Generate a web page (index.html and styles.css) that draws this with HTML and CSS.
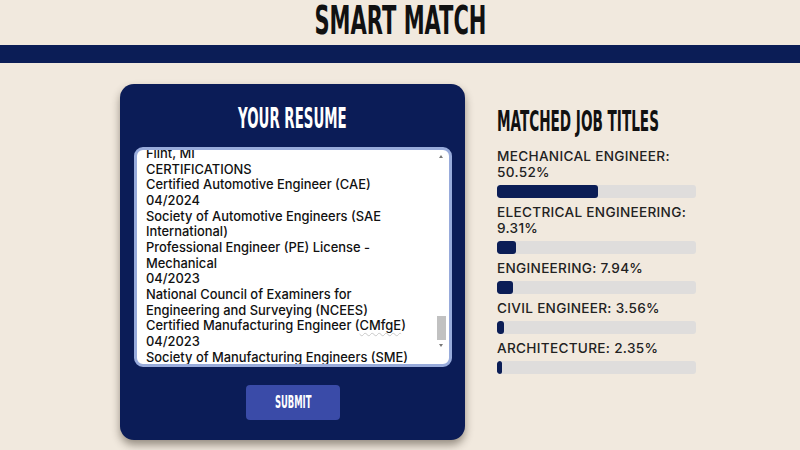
FILE: index.html
```html
<!DOCTYPE html>
<html>
<head>
<meta charset="utf-8">
<link rel="stylesheet" href="styles.css">
</head>
<body>
<header class="top">
  <h1 class="title"><span class="cond">SMART MATCH</span></h1>
</header>
<div class="band"></div>
<main class="main">
  <section class="card">
    <h2 class="card-title"><span class="cond">YOUR RESUME</span></h2>
    <div class="resume-box">
      <div class="resume-text">
        <div class="lines">
          <div>Flint, MI</div>
          <div>CERTIFICATIONS</div>
          <div>Certified Automotive Engineer (CAE)</div>
          <div>04/2024</div>
          <div>Society of Automotive Engineers (SAE</div>
          <div>International)</div>
          <div>Professional Engineer (PE) License -</div>
          <div>Mechanical</div>
          <div>04/2023</div>
          <div>National Council of Examiners for</div>
          <div>Engineering and Surveying (NCEES)</div>
          <div>Certified Manufacturing Engineer (<span class="squiggle">CMfgE</span>)</div>
          <div>04/2023</div>
          <div>Society of Manufacturing Engineers (SME)</div>
        </div>
      </div>
      <div class="scrollbar">
        <span class="arrow up"></span>
        <span class="track"><span class="thumb"></span></span>
        <span class="arrow down"></span>
      </div>
    </div>
    <button class="submit"><span class="cond">SUBMIT</span></button>
  </section>
  <section class="results">
    <h2 class="results-title"><span class="cond">MATCHED JOB TITLES</span></h2>
    <div class="item">
      <div class="label">MECHANICAL ENGINEER:<br>50.52%</div>
      <div class="bar"><div class="fill" style="width:50.52%"></div></div>
    </div>
    <div class="item">
      <div class="label">ELECTRICAL ENGINEERING:<br>9.31%</div>
      <div class="bar"><div class="fill" style="width:9.31%"></div></div>
    </div>
    <div class="item">
      <div class="label">ENGINEERING: 7.94%</div>
      <div class="bar"><div class="fill" style="width:7.94%"></div></div>
    </div>
    <div class="item">
      <div class="label">CIVIL ENGINEER: 3.56%</div>
      <div class="bar"><div class="fill" style="width:3.56%"></div></div>
    </div>
    <div class="item">
      <div class="label">ARCHITECTURE: 2.35%</div>
      <div class="bar"><div class="fill" style="width:2.35%"></div></div>
    </div>
  </section>
</main>
</body>
</html>
```
FILE: styles.css
```css
* { box-sizing: border-box; }
html, body { margin: 0; padding: 0; }
body {
  width: 800px;
  height: 450px;
  overflow: hidden;
  background: #f1e9de;
  font-family: Inter, "DejaVu Sans", sans-serif;
  color: #111;
}
.cond {
  display: inline-block;
  font-family: "DejaVu Sans Condensed", "DejaVu Sans", sans-serif;
  font-weight: 700;
  transform: scaleX(0.55);
  transform-origin: center;
  white-space: nowrap;
}
.top {
  height: 45px;
  display: flex;
  justify-content: center;
}
.title {
  margin: 0;
  font-size: 39px;
  line-height: 40px;
  color: #111;
}
.title .cond { transform: scaleX(0.6); }
.band {
  height: 18px;
  background: #0b1d56;
}
.main {
  display: flex;
  padding: 21px 0 0 120px;
}
.card {
  width: 345px;
  height: 356px;
  background: #0b1c57;
  border-radius: 14px;
  box-shadow: 0 5px 8px rgba(40, 30, 20, 0.45);
  display: flex;
  flex-direction: column;
  align-items: center;
  padding-top: 20px;
}
.card-title {
  margin: 0;
  height: 43px;
  color: #fff;
  font-size: 28px;
  line-height: 28px;
}
.card-title .cond { transform: scaleX(0.53); }
.resume-box {
  width: 318px;
  height: 220px;
  background: #fff;
  border: 3px solid #98abdb;
  border-radius: 9px;
  display: flex;
  overflow: hidden;
  margin-left: 1px;
}
.resume-text {
  flex: 1;
  overflow: hidden;
  padding-left: 9px;
}
.lines {
  margin-top: -4px;
  font-size: 12.9px;
  line-height: 15.67px;
  font-weight: 500;
  color: #111;
  white-space: nowrap;
}
.squiggle {
  text-decoration: underline wavy #c8c8c8 1px;
  text-underline-offset: 2px;
}
.scrollbar {
  width: 12px;
  margin-right: 2px;
  display: flex;
  flex-direction: column;
  align-items: center;
  padding: 5px 0 17px;
}
.arrow {
  width: 0;
  height: 0;
  border-left: 2.5px solid transparent;
  border-right: 2.5px solid transparent;
}
.arrow.up { border-bottom: 3px solid #777; }
.arrow.down { border-top: 3px solid #777; }
.track {
  flex: 1;
  width: 10px;
  display: flex;
  flex-direction: column;
  justify-content: flex-end;
  padding: 0 0 4px;
}
.thumb {
  height: 24px;
  width: 9px;
  margin-left: 0.5px;
  background: #c1c1c1;
}
.submit {
  margin-top: 18px;
  width: 94px;
  height: 35px;
  border: none;
  border-radius: 4px;
  background: #3a4ba8;
  color: #fff;
  font-size: 17px;
  padding: 0;
  margin-left: 1px;
}
.results {
  margin-left: 32px;
  width: 199px;
  padding-top: 21px;
}
.results-title {
  margin: 0 0 10px;
  font-size: 28px;
  line-height: 32px;
  color: #111;
  white-space: nowrap;
}
.results-title .cond { transform: scaleX(0.54); transform-origin: left center; }
.label {
  font-size: 13.6px;
  line-height: 16px;
  font-weight: 500;
  color: #222;
  letter-spacing: 0.3px;
  white-space: nowrap;
}
.bar {
  margin: 5px 0 6px;
  height: 13px;
  background: #dfdddc;
  border-radius: 3px;
  overflow: hidden;
}
.fill {
  height: 100%;
  min-width: 5px;
  background: #0b1d56;
  border-radius: 3px;
}
```
